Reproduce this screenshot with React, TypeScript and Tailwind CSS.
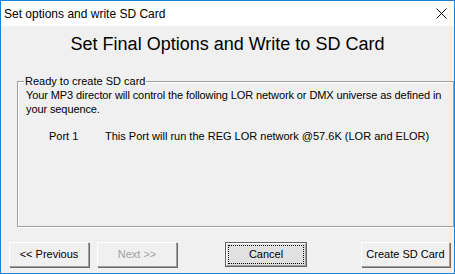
import React from 'react';

const sans = { fontFamily: '"Liberation Sans", Arial, sans-serif' };

const Btn: React.FC<{ label: string; w: string; disabled?: boolean; focused?: boolean }> = ({ label, w, disabled, focused }) => {
  if (focused) {
    return (
      <div className={`${w} h-[25px] border border-[#646464] bg-[#e1e1e1] flex`}>
        <div className="flex-1 border border-white border-r-[#a0a0a0] border-b-[#a0a0a0] p-[1px] flex">
          <div className="flex-1 border border-dotted border-black flex items-center justify-center text-[11px] text-black">
            {label}
          </div>
        </div>
      </div>
    );
  }
  return (
    <div
      className={`${w} h-[25px] border border-white border-r-[#a0a0a0] border-b-[#a0a0a0] shadow-[1px_1px_0_#696969] bg-[#f0f0f0] flex items-center justify-center text-[11px] ${
        disabled ? 'text-[#a0a0a0]' : 'text-black'
      }`}
    >
      {label}
    </div>
  );
};

export default function App() {
  return (
    <div className="w-[455px] h-[274px] border border-[#1883d7] bg-[#f0f0f0] flex flex-col overflow-hidden" style={sans}>
      <div className="h-[25px] bg-white flex items-center justify-between pl-[3px] pr-[7px] shrink-0">
        <span className="text-[12px] text-black">Set options and write SD Card</span>
        <svg width="11" height="11" viewBox="0 0 11 11">
          <path d="M0.5 0.5 L10.5 10.5 M10.5 0.5 L0.5 10.5" stroke="#000" strokeWidth="1" />
        </svg>
      </div>

      <div className="mt-[7px] h-[22px] text-center text-[18px] leading-[22px] text-black">
        Set Final Options and Write to SD Card
      </div>

      <fieldset className="mt-[19px] ml-[16px] h-[153px] border border-[#a0a0a0] shadow-[inset_1px_1px_0_#fff,1px_1px_0_#fff] pl-[8px] pr-0">
        <legend className="ml-[-2px] px-[1px] text-[11px] leading-[14px] text-black">Ready to create SD card</legend>
        <p className="text-[11px] leading-[14px] tracking-[-0.1px] text-black">
          Your MP3 director will control the following LOR network or DMX universe as defined in your sequence.
        </p>
        <div className="mt-[13px] flex text-[11px] leading-[14px] text-black">
          <span className="ml-[23px] w-[56px]">Port 1</span>
          <span>This Port will run the REG LOR network @57.6K (LOR and ELOR)</span>
        </div>
      </fieldset>

      <div className="mt-[15px] ml-[8px] flex">
        <Btn label="<< Previous" w="w-[80px]" />
        <div className="ml-[8px]">
          <Btn label="Next >>" w="w-[80px]" disabled />
        </div>
        <div className="ml-[48px]">
          <Btn label="Cancel" w="w-[82px]" focused />
        </div>
        <div className="ml-[54px]">
          <Btn label="Create SD Card" w="w-[89px]" />
        </div>
      </div>
    </div>
  );
}
